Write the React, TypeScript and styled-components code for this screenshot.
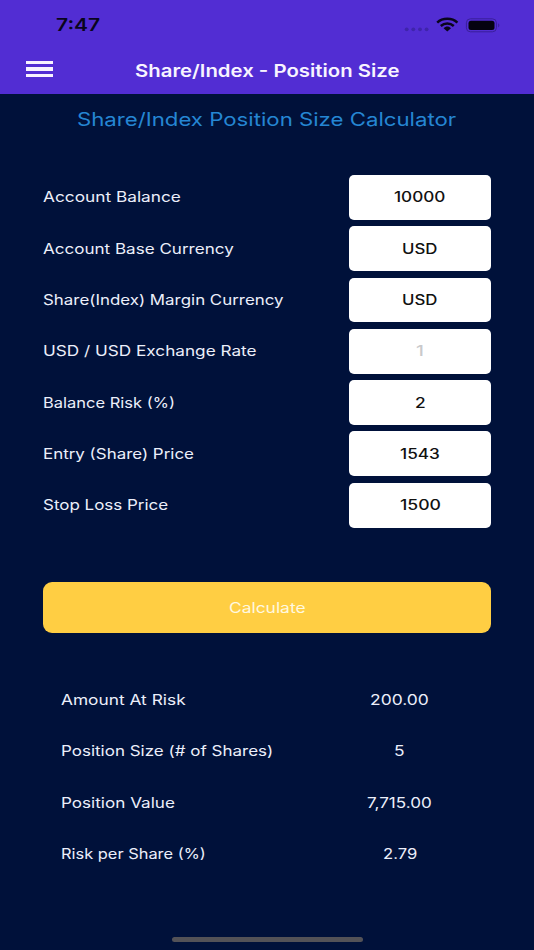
import React, { useLayoutEffect, useRef, useState } from 'react';
import styled, { createGlobalStyle } from 'styled-components';

const GlobalStyle = createGlobalStyle`
  * { box-sizing: border-box; }
  html, body { margin: 0; background: #00113a; }
  body { font-family: Inter, Roboto, sans-serif; }
`;

const Screen = styled.main`
  display: flex;
  flex-direction: column;
  width: 534px;
  height: 950px;
  overflow: hidden;
  background: #00113a;
  color: #eceffa;
`;

const Header = styled.header`
  display: flex;
  flex-direction: column;
  flex: none;
  height: 93.5px;
  background: #522dd3;
`;

const StatusBar = styled.div`
  display: flex;
  align-items: center;
  justify-content: space-between;
  height: 51px;
  padding: 1px 34px 0 56px;
  color: #09051c;
`;

const StatusIcons = styled.svg`
  display: block;
  width: 96px;
  height: 16px;
  margin-top: -2px;
`;

const NavBar = styled.div`
  display: grid;
  grid-template-columns: 54px 1fr 54px;
  align-items: center;
  height: 41px;
  color: #f8f4ff;
`;

const MenuButton = styled.button`
  display: flex;
  flex-direction: column;
  gap: 3px;
  width: 27px;
  margin: -5px 0 0 26px;
  padding: 0;
  border: 0;
  background: none;
`;

const MenuLine = styled.span`
  height: 3.3px;
  background: #f8f2ff;
`;

const Center = styled.div`
  display: flex;
  justify-content: center;
`;

const Heading = styled.h1`
  display: flex;
  justify-content: center;
  margin: 13.5px 1px 0 0;
  font-weight: 400;
  color: #2586d3;
`;

const Form = styled.section`
  display: flex;
  flex-direction: column;
  gap: 6.5px;
  padding: 0 43px 0 42.5px;
  margin-top: 42.2px;
`;

const Row = styled.div`
  display: flex;
  align-items: center;
  justify-content: space-between;
  height: 44.8px;
`;

const Field = styled.div<{ $muted?: boolean }>`
  display: flex;
  align-items: center;
  justify-content: center;
  width: 142px;
  height: 44.8px;
  border-radius: 5px;
  background: #fff;
  color: ${(p) => (p.$muted ? '#c9c9cb' : '#111')};
`;

const CalculateButton = styled.button`
  display: flex;
  align-items: center;
  justify-content: center;
  height: 51px;
  margin: 54.5px 43px 0;
  padding: 1px 0 0;
  border: 0;
  border-radius: 9px;
  background: #ffce43;
  color: #fff9e0;
  font-family: inherit;
`;

const Results = styled.section`
  display: flex;
  flex-direction: column;
  gap: 6.5px;
  margin-top: 44.5px;
  padding: 0 43px 0 60.5px;
`;

const ResultValue = styled.div`
  display: flex;
  justify-content: center;
  width: 183px;
`;

const HomeIndicator = styled.div`
  width: 191px;
  height: 5px;
  margin: auto auto 8.5px 172px;
  border-radius: 3px;
  background: #535257;
`;

const WideBox = styled.span<{ $width: number; $size: number; $weight: number }>`
  display: block;
  flex: none;
  width: ${(p) => p.$width}px;
  font-size: ${(p) => p.$size}px;
  font-weight: ${(p) => p.$weight};
  line-height: 1.4;
  text-align: left;
  white-space: nowrap;
`;

const WideGlyphs = styled.span`
  display: inline-block;
  vertical-align: top;
  transform-origin: 0 50%;
`;

interface WideTextProps {
  children: string;
  width: number;
  size?: number;
  weight?: number;
}

/* Expanded lettering: widens a line of text to fill the given width. */
function WideText({ children, width, size = 14.2, weight = 400 }: WideTextProps) {
  const ref = useRef<HTMLSpanElement>(null);
  const [scale, setScale] = useState(1);
  useLayoutEffect(() => {
    if (ref.current) setScale(width / ref.current.offsetWidth);
  }, [children, width, size, weight]);
  return (
    <WideBox $width={width} $size={size} $weight={weight}>
      <WideGlyphs ref={ref} style={{ transform: `scaleX(${scale})` }}>
        {children}
      </WideGlyphs>
    </WideBox>
  );
}

const fields = [
  { label: 'Account Balance', labelWidth: 137.5, value: '10000', valueWidth: 52 },
  { label: 'Account Base Currency', labelWidth: 191, value: 'USD', valueWidth: 35.5 },
  { label: 'Share(Index) Margin Currency', labelWidth: 240.5, value: 'USD', valueWidth: 35.5 },
  { label: 'USD / USD Exchange Rate', labelWidth: 213, value: '1', valueWidth: 8, muted: true },
  { label: 'Balance Risk (%)', labelWidth: 132.5, value: '2', valueWidth: 11 },
  { label: 'Entry (Share) Price', labelWidth: 151.5, value: '1543', valueWidth: 40 },
  { label: 'Stop Loss Price', labelWidth: 125.5, value: '1500', valueWidth: 41 },
];

const results = [
  { label: 'Amount At Risk', labelWidth: 124.5, value: '200.00', valueWidth: 59 },
  { label: 'Position Size (# of Shares)', labelWidth: 212, value: '5', valueWidth: 11 },
  { label: 'Position Value', labelWidth: 114.5, value: '7,715.00', valueWidth: 65 },
  { label: 'Risk per Share (%)', labelWidth: 144.5, value: '2.79', valueWidth: 34 },
];

export default function App() {
  return (
    <Screen>
      <GlobalStyle />
      <Header>
        <StatusBar>
          <WideText width={44.5} size={17} weight={600}>7:47</WideText>
          <StatusIcons viewBox="0 0 96 16" aria-label="Wi-Fi and battery">
            <g fill="#3f24ab">
              <circle cx="2.7" cy="12.3" r="1.9" />
              <circle cx="9.3" cy="12.3" r="1.9" />
              <circle cx="16" cy="12.3" r="1.9" />
              <circle cx="22.6" cy="12.3" r="1.9" />
            </g>
            <g fill="none" stroke="#09051c" strokeWidth="2.5">
              <path d="M33.2 5.6C38.6 .6 48 .6 53.4 5.6" />
              <path d="M36.8 9C40.6 5.6 46 5.6 49.8 9" />
            </g>
            <path d="M39.6 11.2C41.8 9 44.8 9 47 11.2L43.3 14.4Z" fill="#09051c" />
            <rect x="62.4" y="1.8" width="30" height="13" rx="4" fill="none" stroke="#3a1f9a" />
            <rect x="64.5" y="3.7" width="26" height="9.2" rx="2.5" fill="#050211" />
            <path d="M94.2 6.2C95.8 7 95.8 9.6 94.2 10.4Z" fill="#3a1f9a" />
          </StatusIcons>
        </StatusBar>
        <NavBar>
          <MenuButton aria-label="Menu">
            <MenuLine />
            <MenuLine />
            <MenuLine />
          </MenuButton>
          <Center>
            <WideText width={264} size={17.2} weight={600}>Share/Index - Position Size</WideText>
          </Center>
        </NavBar>
      </Header>
      <Heading>
        <WideText width={379} size={18.4}>Share/Index Position Size Calculator</WideText>
      </Heading>
      <Form>
        {fields.map((f) => (
          <Row key={f.label}>
            <WideText width={f.labelWidth}>{f.label}</WideText>
            <Field $muted={f.muted}>
              <WideText width={f.valueWidth} weight={450}>{f.value}</WideText>
            </Field>
          </Row>
        ))}
      </Form>
      <CalculateButton>
        <WideText width={76}>Calculate</WideText>
      </CalculateButton>
      <Results>
        {results.map((r) => (
          <Row key={r.label}>
            <WideText width={r.labelWidth}>{r.label}</WideText>
            <ResultValue>
              <WideText width={r.valueWidth}>{r.value}</WideText>
            </ResultValue>
          </Row>
        ))}
      </Results>
      <HomeIndicator />
    </Screen>
  );
}
